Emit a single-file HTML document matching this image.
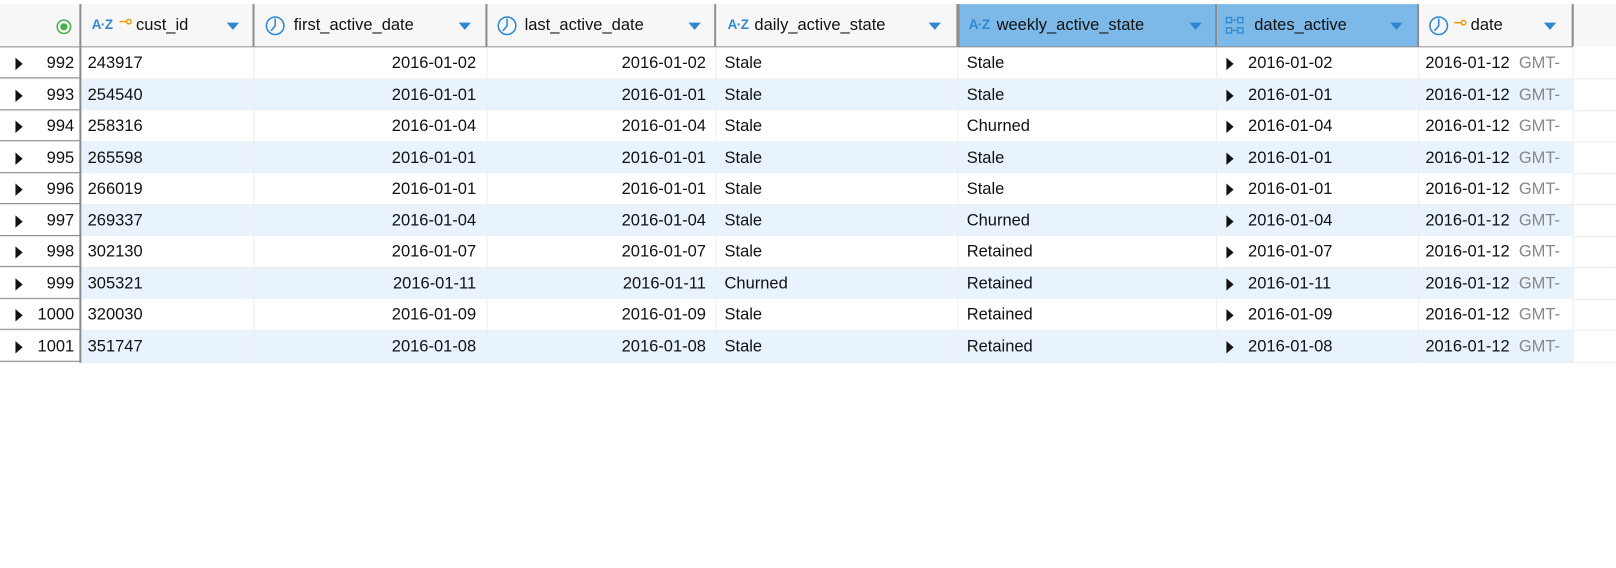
<!DOCTYPE html>
<html><head><meta charset="utf-8"><style>
body{margin:0;width:1616px;height:568px;background:#fff;font-family:"Liberation Sans",sans-serif;font-size:16px;color:#111;position:relative;overflow:hidden}
#w{position:absolute;left:0;top:0;width:1568px;height:551px;transform:scale(1.0306);transform-origin:0 0}
.a{position:absolute;box-sizing:border-box}
.h{position:absolute;top:4px;height:41px;box-sizing:border-box;border-right:2px solid #8c8c8c;background:#f7f7f7}
.hs{background:#7db9e8}
.t{position:absolute;top:12px;white-space:nowrap}
.dd{position:absolute;top:18px;width:0;height:0;border-left:6px solid transparent;border-right:6px solid transparent;border-top:7px solid #2f88cf}
.az{position:absolute;top:12px;color:#2f88cf;font-size:13px;font-weight:bold;letter-spacing:-0.5px}
.row{position:absolute;left:0;width:1568px;height:31px;border-bottom:1px solid #ececec;box-sizing:border-box}
.c{position:absolute;top:7px;white-space:nowrap}
.tri{position:absolute;width:0;height:0;border-top:6px solid transparent;border-bottom:6px solid transparent;border-left:7px solid #111}
</style></head><body><div id="w">
<div class="a" style="left:0;top:4px;width:1568px;height:41px;background:#f7f7f7"></div>
<div class="a" style="left:0;top:44px;width:1526px;height:2px;background:#8c8c8c"></div>
<div class="h" style="left:0;width:79px"><svg class="a" style="left:54px;top:14px" width="16" height="16"><circle cx="8" cy="8" r="6.5" fill="none" stroke="#4caf50" stroke-width="1.5"/><circle cx="8" cy="8" r="3.5" fill="#4caf50"/></svg></div>
<div class="h" style="left:79px;width:168px"><span class="az" style="left:10px">A·Z</span><svg class="a" style="left:37px;top:14px" width="12" height="8"><circle cx="9" cy="3" r="2.2" fill="none" stroke="#f39c12" stroke-width="1.5"/><line x1="0" y1="3" x2="7" y2="3" stroke="#f39c12" stroke-width="1.5"/></svg><span class="t" style="left:53px">cust_id</span><div class="dd" style="left:141px"></div></div>
<div class="h" style="left:247px;width:226px"><svg class="a" style="left:10px;top:11px" width="20" height="20"><circle cx="10" cy="10" r="8.5" fill="none" stroke="#2f88cf" stroke-width="1.5"/><path d="M10 3v7l-4 5" fill="none" stroke="#2f88cf" stroke-width="1.5"/></svg><span class="t" style="left:38px">first_active_date</span><div class="dd" style="left:198px"></div></div>
<div class="h" style="left:473px;width:222px"><svg class="a" style="left:9px;top:11px" width="20" height="20"><circle cx="10" cy="10" r="8.5" fill="none" stroke="#2f88cf" stroke-width="1.5"/><path d="M10 3v7l-4 5" fill="none" stroke="#2f88cf" stroke-width="1.5"/></svg><span class="t" style="left:36px">last_active_date</span><div class="dd" style="left:195px"></div></div>
<div class="h" style="left:695px;width:235px"><span class="az" style="left:11px">A·Z</span><span class="t" style="left:37px">daily_active_state</span><div class="dd" style="left:206px"></div></div>
<div class="h hs" style="left:930px;width:251px;border-left:1px solid #888"><span class="az" style="left:9px">A·Z</span><span class="t" style="left:36px">weekly_active_state</span><div class="dd" style="left:223px"></div></div>
<div class="h hs" style="left:1181px;width:196px"><svg class="a" style="left:8px;top:12px" width="20" height="18" fill="none" stroke="#2f88cf" stroke-width="1.3"><rect x="1" y="1" width="5" height="5"/><rect x="12" y="1" width="5" height="5"/><rect x="1" y="11" width="5" height="5"/><rect x="12" y="11" width="5" height="5"/><line x1="7" y1="3.5" x2="11" y2="3.5"/><line x1="7" y1="13.5" x2="11" y2="13.5"/></svg><span class="t" style="left:36px">dates_active</span><div class="dd" style="left:168px"></div></div>
<div class="h" style="left:1377px;width:150px"><svg class="a" style="left:9px;top:11px" width="20" height="20"><circle cx="10" cy="10" r="8.5" fill="none" stroke="#2f88cf" stroke-width="1.5"/><path d="M10 3v7l-4 5" fill="none" stroke="#2f88cf" stroke-width="1.5"/></svg><svg class="a" style="left:34px;top:15px" width="12" height="8"><circle cx="9" cy="3" r="2.2" fill="none" stroke="#f39c12" stroke-width="1.5"/><line x1="0" y1="3" x2="7" y2="3" stroke="#f39c12" stroke-width="1.5"/></svg><span class="t" style="left:50px">date</span><div class="dd" style="left:121px"></div></div>

<div id="rows"></div>
<div class="a" style="left:77px;top:46px;width:2px;height:306px;background:#8c8c8c"></div>
</div>
<script>
var d=[["992","243917","2016-01-02","Stale","Stale"],["993","254540","2016-01-01","Stale","Stale"],["994","258316","2016-01-04","Stale","Churned"],["995","265598","2016-01-01","Stale","Stale"],["996","266019","2016-01-01","Stale","Stale"],["997","269337","2016-01-04","Stale","Churned"],["998","302130","2016-01-07","Stale","Retained"],["999","305321","2016-01-11","Churned","Retained"],["1000","320030","2016-01-09","Stale","Retained"],["1001","351747","2016-01-08","Stale","Retained"]];
var h="";
d.forEach(function(r,i){
var top=Math.round(46+i*30.55);var bg=i%2?"#e8f3fd":"#fff";
h+='<div class="row" style="top:'+top+'px">'
+'<div class="a" style="left:79px;top:0;width:1447px;height:30px;background:'+bg+'"></div>'
+'<div class="a" style="left:0;top:29px;width:78px;height:1px;background:#8c8c8c"></div>'
+'<div class="tri" style="left:15px;top:10px"></div>'
+'<span class="c" style="right:'+(1568-72)+'px">'+r[0]+'</span>'
+'<div class="a" style="left:246px;top:0;width:1px;height:30px;background:#eee"></div>'
+'<div class="a" style="left:472px;top:0;width:1px;height:30px;background:#eee"></div>'
+'<div class="a" style="left:694px;top:0;width:1px;height:30px;background:#eee"></div>'
+'<div class="a" style="left:929px;top:0;width:1px;height:30px;background:#eee"></div>'
+'<div class="a" style="left:1180px;top:0;width:1px;height:30px;background:#eee"></div>'
+'<div class="a" style="left:1376px;top:0;width:1px;height:30px;background:#eee"></div>'
+'<div class="a" style="left:1526px;top:0;width:1px;height:30px;background:#eee"></div>'
+'<span class="c" style="left:85px">'+r[1]+'</span>'
+'<span class="c" style="right:'+(1568-462)+'px">'+r[2]+'</span>'
+'<span class="c" style="right:'+(1568-685)+'px">'+r[2]+'</span>'
+'<span class="c" style="left:703px">'+r[3]+'</span>'
+'<span class="c" style="left:938px">'+r[4]+'</span>'
+'<div class="tri" style="left:1190px;top:10px"></div>'
+'<span class="c" style="left:1211px">'+r[2]+'</span>'
+'<div class="a" style="left:1377px;top:0;width:149px;height:30px;overflow:hidden"><span class="c" style="left:6px">2016-01-12 &nbsp;<span style="color:#888">GMT-</span></span></div>'
+'</div>';
});
document.getElementById("rows").innerHTML=h;
</script>
</body></html>
